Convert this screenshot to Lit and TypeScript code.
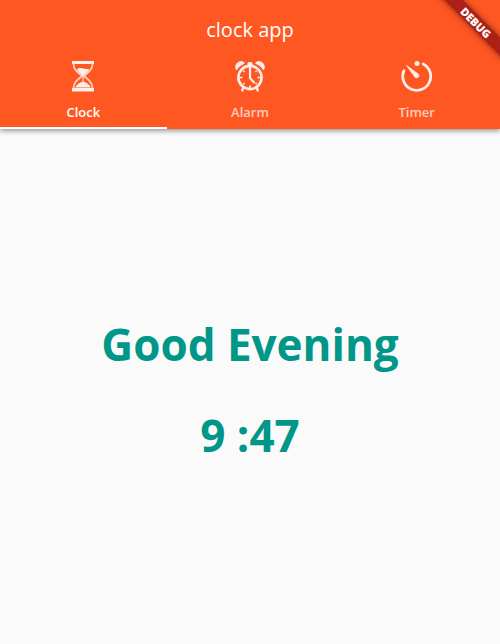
import { LitElement, html, css, svg } from "lit";
import { customElement, state } from "lit/decorators.js";

const hourglass = svg`
  <path d="M5 1H27V4H5ZM5 28H27V31.500H5Z" fill="currentColor" />
  <path d="M6.500 4C6.500 9 10 12 15 16C10 20 6.500 23 6.500 28M25.500 4C25.500 9 22 12 17 16C22 20 25.500 23 25.500 28"
    fill="none" stroke="currentColor" stroke-width="1.700" opacity="0.8" />
  <path d="M10 9.500C12 7.500 14 8 16 8.500C18.500 9.300 20.500 8.500 22.300 9.500C21.500 12 18 13.500 16 16C14 13.500 10.800 12 10 9.500Z"
    fill="currentColor" />
  <path d="M16 21.500C19.500 22.500 22.500 24.500 23.800 27.500H8.200C9.500 24.500 12.500 22.500 16 21.500Z"
    fill="currentColor" />
  <path d="M16 15V22" stroke="currentColor" stroke-width="1" />`;

const alarm = svg`
  <circle cx="16" cy="17.500" r="11.600" fill="none" stroke="currentColor" stroke-width="2.600" />
  <path d="M2.500 10C0.300 6.500 2.500 1.500 7.500 1.500C9 1.500 10 2.200 10.300 3.400C7 4.600 4.200 6.900 2.500 10ZM29.500 10C31.700 6.500 29.500 1.500 24.500 1.500C23 1.500 22 2.200 21.700 3.400C25 4.600 27.800 6.900 29.500 10Z"
    fill="currentColor" stroke="currentColor" stroke-width="0.800" stroke-linejoin="round" />
  <path d="M13.500 3.500C14 1.600 18 1.600 18.500 3.500V5H13.500Z" fill="currentColor" />
  <path d="M9.200 27.500L8.300 30.500M22.800 27.500L23.700 30.500" stroke="currentColor" stroke-width="2.300"
    stroke-linecap="round" />
  <path d="M16 6V18L20 22.500" fill="none"
    stroke="currentColor" stroke-width="2.200" stroke-linecap="round" stroke-linejoin="round" />
  <path d="M16 25.500V28M5.500 17.500H8.500M23.500 17.500H26.500M9.300 10.800L10.500 12M22.700 10.800L21.500 12M9.300 24.200L10.500 23M22.700 24.200L21.500 23"
    stroke="currentColor" stroke-width="1.600" />`;

const timer = svg`
  <path d="M2.900 10.700A14 14 0 1 0 22.200 3.900" fill="none" stroke="currentColor"
    stroke-width="2.800" stroke-linecap="round" />
  <circle cx="16" cy="3.500" r="2.500" fill="currentColor" />
  <path d="M5.300 5.300L17.500 14.300A2.300 2.300 0 0 1 14.300 17.500Z" fill="currentColor"
    stroke="currentColor" stroke-width="0.800" stroke-linejoin="round" />`;

const tabs = [
  { label: "Clock", icon: hourglass },
  { label: "Alarm", icon: alarm },
  { label: "Timer", icon: timer },
];

@customElement("app-root")
export class AppRoot extends LitElement {
  static styles = css`
    :host {
      display: flex;
      flex-direction: column;
      position: relative;
      overflow: hidden;
      min-height: 100vh;
      background: #fafafa;
      font-family: "Open Sans", "Noto Sans", sans-serif;
    }
    .bar {
      background: #ff5722;
      color: #fff;
      box-shadow: 0 2px 5px rgba(0, 0, 0, 0.4);
    }
    .title {
      margin: 0;
      height: 56px;
      line-height: 60px;
      text-align: center;
      font-size: 20px;
      font-weight: 400;
    }
    .tabs {
      display: grid;
      grid-template-columns: repeat(3, 1fr);
    }
    .tab {
      display: flex;
      flex-direction: column;
      align-items: center;
      gap: 10px;
      padding: 4px 0 5px;
      border: 0;
      border-bottom: 2px solid transparent;
      background: none;
      color: #fff;
      font: 600 13px/20px "Open Sans", "Noto Sans", sans-serif;
      cursor: pointer;
    }
    .tab[aria-selected="true"] {
      border-bottom-color: #fff;
    }
    .label {
      opacity: 0.7;
    }
    .tab[aria-selected="true"] .label {
      opacity: 1;
    }
    .icon {
      width: 32px;
      height: 32px;
      opacity: 0.9;
    }
    .content {
      flex: 1;
      display: flex;
      flex-direction: column;
      align-items: center;
      justify-content: center;
      gap: 31px;
      padding-top: 6px;
      color: #009688;
      font-size: 44px;
      line-height: 60px;
      font-weight: 700;
      text-align: center;
    }
    .content p {
      margin: 0;
    }
    .debug {
      position: absolute;
      top: 16px;
      right: -36px;
      width: 120px;
      transform: rotate(45deg);
      background: #ad2018;
      box-shadow: 0 0 6px rgba(0, 0, 0, 0.5);
      color: #fff;
      font-size: 11px;
      line-height: 13px;
      font-weight: 800;
      text-align: center;
      pointer-events: none;
    }
  `;

  @state() private selected = 0;

  render() {
    return html`
      <header class="bar">
        <h1 class="title">clock app</h1>
        <div class="tabs" role="tablist">
          ${tabs.map(
            (tab, i) => html`
              <button
                class="tab"
                role="tab"
                aria-selected=${i === this.selected ? "true" : "false"}
                @click=${() => (this.selected = i)}
              >
                <svg class="icon" viewBox="0 0 32 32" aria-hidden="true">${tab.icon}</svg>
                <span class="label">${tab.label}</span>
              </button>
            `
          )}
        </div>
      </header>
      <main class="content">
        <p>Good Evening</p>
        <p>9 :47</p>
      </main>
      <div class="debug">DEBUG</div>
    `;
  }
}
